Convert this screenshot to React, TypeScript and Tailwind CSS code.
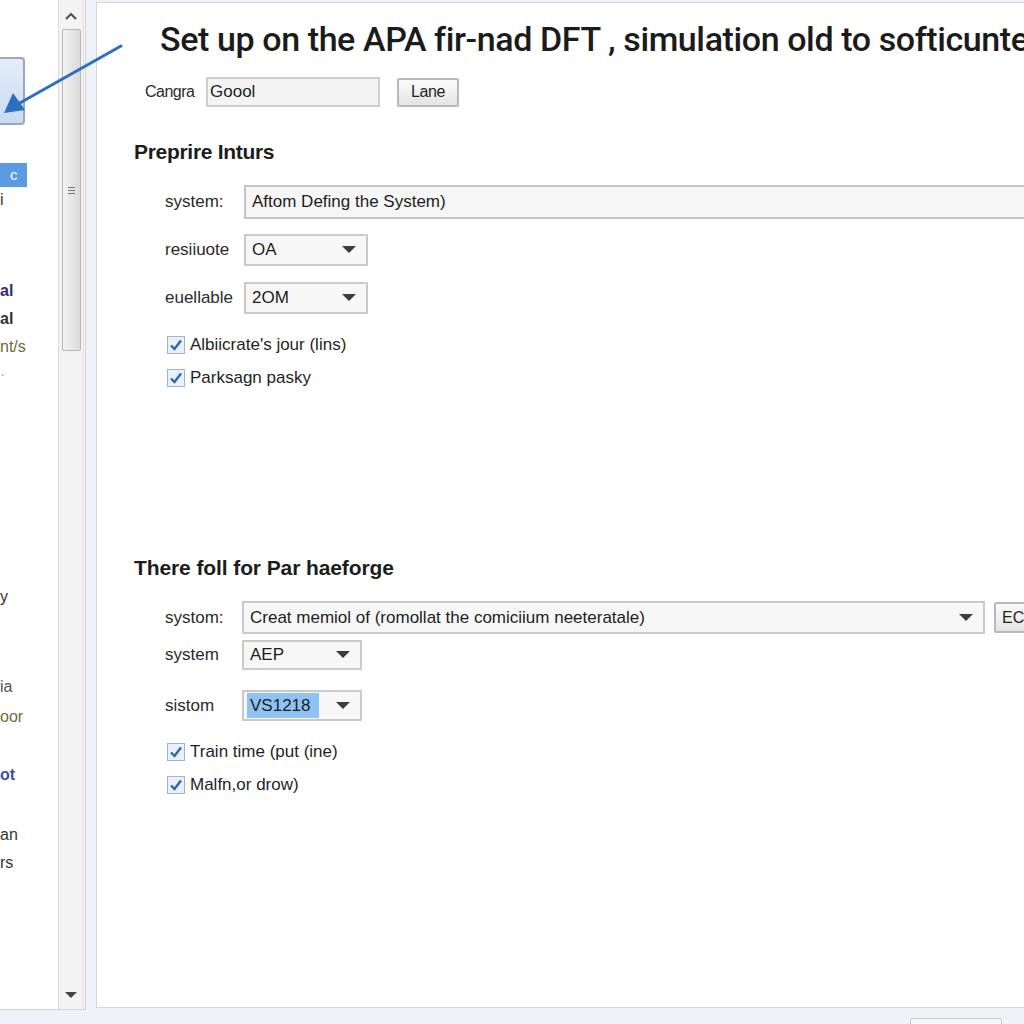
import React from "react";

const font = { fontFamily: '"Liberation Sans", Arial, sans-serif' };

const Caret = () => (
  <svg width="14" height="8" viewBox="0 0 14 8" className="shrink-0">
    <path d="M0 0 L14 0 L7 7 Z" fill="#3c3c3c" />
  </svg>
);

const Check = () => (
  <span className="flex h-[18px] w-[18px] shrink-0 items-center justify-center border border-[#9fb4cc] bg-[#e8f0fa]">
    <svg width="14" height="14" viewBox="0 0 14 14">
      <path d="M2 7.5 L5.5 11 L12 2.5" fill="none" stroke="#2f64b0" strokeWidth="2.4" />
    </svg>
  </span>
);

const Select = ({ value, w, highlight }: { value: string; w: string; highlight?: boolean }) => (
  <div className={`flex h-full shrink-0 items-center justify-between border-2 border-[#c9c9c9] bg-[#f7f7f7] pl-[3px] pr-[10px] ${w}`}>
    <span className={`whitespace-nowrap text-[17px] text-[#1d1d1d] ${highlight ? "bg-[#8ec2f2] px-[3px] pr-[8px]" : "px-[3px]"}`}>{value}</span>
    <Caret />
  </div>
);

const Row = ({ label, mt, h, lw, children }: { label: string; mt: string; h: string; lw: string; children: React.ReactNode }) => (
  <div className={`flex items-center pl-[68px] ${mt} ${h}`}>
    <span className={`shrink-0 text-[17px] text-[#2a2a2a] ${lw}`}>{label}</span>
    {children}
  </div>
);

const CheckRow = ({ text, mt }: { text: string; mt: string }) => (
  <div className={`flex h-[24px] items-center gap-[5px] pl-[70px] ${mt}`}>
    <Check />
    <span className="text-[17px] text-[#1f1f1f]">{text}</span>
  </div>
);

const SideItem = ({ text, cls, mt }: { text: string; cls: string; mt: string }) => (
  <div className={`flex h-[24px] items-center whitespace-nowrap text-[16px] ${cls} ${mt}`}>{text}</div>
);

export default function App() {
  return (
    <div className="relative flex h-[1024px] w-[1024px] overflow-hidden bg-[#eef1f5]" style={font}>
      {/* left list panel */}
      <div className="flex h-[1010px] w-[86px] shrink-0 border-r border-b border-[#cfd3d8] bg-white">
        <div className="w-[58px] shrink-0 overflow-hidden">
          <div className="ml-[-40px] mt-[57px] h-[68px] w-[65px] rounded-[4px] border-2 border-[#9aa8ba] bg-gradient-to-b from-[#e4eefa] to-[#c8daf2]" />
          <div className="mt-[38px] flex h-[24px] w-[27px] items-center bg-[#5a9be3] pl-[10px] text-[15px] text-white">c</div>
          <SideItem text="i" cls="text-[#333]" mt="mt-[1px]" />
          <SideItem text="al" cls="font-bold text-[#2b3170]" mt="mt-[67px]" />
          <SideItem text="al" cls="font-bold text-[#333]" mt="mt-[4px]" />
          <SideItem text="nt/s" cls="text-[#6b6b3a]" mt="mt-[4px]" />
          <SideItem text="·" cls="text-[#aaa]" mt="mt-[4px]" />
          <SideItem text="y" cls="text-[#333]" mt="mt-[198px]" />
          <SideItem text="ia" cls="text-[#555]" mt="mt-[66px]" />
          <SideItem text="oor" cls="text-[#6b6b3a]" mt="mt-[6px]" />
          <SideItem text="ot" cls="font-bold text-[#3a4fa0]" mt="mt-[34px]" />
          <SideItem text="an" cls="text-[#333]" mt="mt-[36px]" />
          <SideItem text="rs" cls="text-[#333]" mt="mt-[4px]" />
        </div>
        {/* scrollbar */}
        <div className="flex w-[26px] shrink-0 flex-col items-center border-x border-[#dcdcdc] bg-[#f3f3f3]">
          <svg width="12" height="8" viewBox="0 0 12 8" className="mt-[12px]">
            <path d="M1 7 L6 2 L11 7" fill="none" stroke="#555" strokeWidth="2.2" />
          </svg>
          <div className="mt-[9px] flex h-[322px] w-[19px] items-center justify-center rounded-[2px] border border-[#b8b8b8] bg-gradient-to-r from-[#f4f4f4] via-[#e6e6e6] to-[#dadada]">
            <div className="flex flex-col gap-[2px]">
              <div className="h-[1px] w-[7px] bg-[#777]" />
              <div className="h-[1px] w-[7px] bg-[#777]" />
              <div className="h-[1px] w-[7px] bg-[#777]" />
            </div>
          </div>
          <div className="flex-1" />
          <svg width="12" height="7" viewBox="0 0 12 7" className="mb-[10px]">
            <path d="M0 0 L12 0 L6 6 Z" fill="#444" />
          </svg>
        </div>
      </div>

      {/* main panel */}
      <div className="ml-[10px] mt-[2px] flex h-[1006px] w-[940px] shrink-0 flex-col border border-[#d3d7dc] bg-white">
        <div className="ml-[63px] mt-[16px] h-[40px] whitespace-nowrap text-[34px] font-medium leading-[40px] tracking-[-0.4px] text-[#1b1b1b]" style={{ fontFamily: 'Roboto, "Liberation Sans", sans-serif' }}>
          Set up on the APA fir-nad DFT , simulation old to softicunte
        </div>

        <div className="mt-[18px] flex h-[30px] items-center pl-[48px]">
          <span className="w-[61px] text-[16px] tracking-[-0.5px] text-[#2a2a2a]">Cangra</span>
          <div className="flex h-full w-[174px] items-center border-2 border-[#cfcfcf] bg-[#f4f4f4] px-[2px] text-[17px] text-[#222]">Goool</div>
          <div className="ml-[17px] flex h-[29px] w-[62px] items-center justify-center rounded-[2px] border-2 border-[#b9b9b9] bg-gradient-to-b from-[#fbfbfb] to-[#e4e4e4] text-[16px] tracking-[-0.4px] text-[#222]">Lane</div>
        </div>

        <div className="ml-[37px] mt-[31px] h-[28px] text-[21px] font-bold leading-[28px] tracking-[-0.3px] text-[#1c1c1c]">Preprire Inturs</div>

        <Row label="system:" mt="mt-[19px]" h="h-[34px]" lw="w-[79px]">
          <div className="flex h-full flex-1 items-center border-2 border-[#c4c4c4] bg-[#f6f6f6] px-[6px] text-[17px] text-[#1d1d1d]">
            Aftom Defing the System)
          </div>
        </Row>
        <Row label="resiiuote" mt="mt-[15px]" h="h-[32px]" lw="w-[79px]">
          <Select value="OA" w="w-[124px]" />
        </Row>
        <Row label="euellable" mt="mt-[16px]" h="h-[32px]" lw="w-[79px]">
          <Select value="2OM" w="w-[124px]" />
        </Row>
        <CheckRow text="Albiicrate's jour (lins)" mt="mt-[19px]" />
        <CheckRow text="Parksagn pasky" mt="mt-[9px]" />

        <div className="ml-[37px] mt-[164px] h-[28px] text-[21px] font-bold leading-[28px] tracking-[-0.1px] text-[#1c1c1c]">There foll for Par haeforge</div>

        <Row label="systom:" mt="mt-[19px]" h="h-[33px]" lw="w-[77px]">
          <Select value="Creat memiol of (romollat the comiciium neeteratale)" w="w-[743px]" />
          <div className="ml-[9px] flex h-[31px] w-[60px] shrink-0 items-center rounded-[2px] border-2 border-[#b9b9b9] bg-gradient-to-b from-[#fbfbfb] to-[#e4e4e4] pl-[6px] text-[16px] text-[#222]">ECO</div>
        </Row>
        <Row label="system" mt="mt-[6px]" h="h-[30px]" lw="w-[77px]">
          <Select value="AEP" w="w-[120px]" />
        </Row>
        <Row label="sistom" mt="mt-[20px]" h="h-[31px]" lw="w-[77px]">
          <Select value="VS1218" w="w-[120px]" highlight />
        </Row>
        <CheckRow text="Train time (put (ine)" mt="mt-[19px]" />
        <CheckRow text="Malfn,or drow)" mt="mt-[9px]" />
      </div>

      {/* bottom-right button edge */}
      <div className="absolute bottom-[-20px] left-[910px] h-[26px] w-[92px] rounded-[2px] border border-[#c8c8c8] bg-[#f7f7f7]" />

      {/* annotation arrow */}
      <svg className="pointer-events-none absolute left-0 top-0" width="140" height="140" viewBox="0 0 140 140">
        <line x1="121" y1="46" x2="18" y2="104" stroke="#2a6fc0" strokeWidth="3" strokeLinecap="round" />
        <path d="M4 113 L13 93 L25 110 Z" fill="#2a6fc0" />
      </svg>
    </div>
  );
}
